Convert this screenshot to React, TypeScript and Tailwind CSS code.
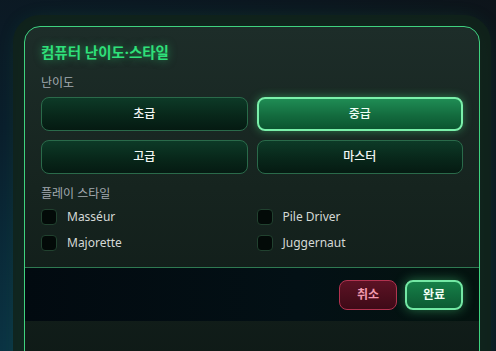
import React, { useState } from "react";

const levels = ["초급", "중급", "고급", "마스터"];
const styles = ["Masséur", "Pile Driver", "Majorette", "Juggernaut"];

export default function App() {
  const [level, setLevel] = useState("중급");
  const [picked, setPicked] = useState<string[]>([]);
  const toggle = (s: string) =>
    setPicked((p) => (p.includes(s) ? p.filter((x) => x !== s) : [...p, s]));

  return (
    <div
      className="w-[496px] h-[351px] overflow-hidden bg-[radial-gradient(ellipse_at_0%_100%,#0b3344_0%,#0a1e2c_45%,#0d141a_100%)] pl-[24px] pr-[16px] pt-[26px]"
      style={{ fontFamily: '"Noto Sans", "Noto Sans CJK KR", sans-serif' }}
    >
      <div className="h-[360px] rounded-t-[16px] border border-[#3fd27f] bg-[linear-gradient(180deg,#1d2d29_0%,#16241f_45%,#0e1916_100%)] shadow-[0_0_0_11px_rgba(16,34,26,0.85),0_0_24px_rgba(34,197,94,0.25)] flex flex-col">
        <div className="px-[16px] pt-[14px]">
          <div className="text-[14.5px] leading-[22px] font-bold text-[#2fe07a] [text-shadow:0_0_8px_rgba(47,224,122,0.55)]">
            컴퓨터 난이도·스타일
          </div>
          <div className="mt-[12px] text-[12px] leading-[16px] text-[#a3aab0]">난이도</div>
          <div className="mt-[6px] grid grid-cols-2 gap-[9px]">
            {levels.map((l) => {
              const on = l === level;
              return (
                <button
                  key={l}
                  onClick={() => setLevel(l)}
                  className={
                    on
                      ? "h-[34px] rounded-[8px] border-2 border-[#7af0aa] bg-[linear-gradient(180deg,#1f8c54_0%,#136b3e_55%,#0c5430_100%)] text-[12px] font-medium text-[#f0fff5] shadow-[0_0_10px_rgba(74,222,128,0.45)]"
                      : "h-[34px] rounded-[8px] border border-[#2a6a4a] bg-[linear-gradient(180deg,#0d3a27_0%,#08271a_55%,#051a12_100%)] text-[12px] font-medium text-[#f3f7f5]"
                  }
                >
                  {l}
                </button>
              );
            })}
          </div>
          <div className="mt-[12px] text-[12px] leading-[16px] text-[#a3aab0]">플레이 스타일</div>
          <div className="mt-[7px] grid grid-cols-2 gap-x-[9px] gap-y-[10px] pb-[16px]">
            {styles.map((s) => {
              const on = picked.includes(s);
              return (
                <label key={s} className="flex items-center gap-[10px] h-[16px] cursor-pointer" onClick={() => toggle(s)}>
                  <span
                    className={
                      on
                        ? "w-[16px] h-[16px] rounded-[4px] border border-[#3fd27f] bg-[#0f5a33]"
                        : "w-[16px] h-[16px] rounded-[4px] border border-[#21412f] bg-[#030a08]"
                    }
                  />
                  <span className="text-[12px] leading-[16px] text-[#d4d9d6]">{s}</span>
                </label>
              );
            })}
          </div>
        </div>
        <div className="border-t border-[#2f7a52] bg-[linear-gradient(90deg,#020a10_0%,#031015_60%,#04130f_100%)] h-[54px] px-[16px] flex items-center justify-end gap-[8px]">
          <button className="w-[58px] h-[30px] rounded-[8px] border border-[#b2324f] bg-[linear-gradient(180deg,#5c1224_0%,#3e0a17_100%)] text-[12px] font-bold text-[#f29ab0]">
            취소
          </button>
          <button className="w-[58px] h-[30px] rounded-[8px] border-2 border-[#73e8a4] bg-[linear-gradient(180deg,#168048_0%,#0d5a33_100%)] text-[12px] font-bold text-[#f0fff5] shadow-[0_0_12px_rgba(74,222,128,0.45)]">
            완료
          </button>
        </div>
        <div className="flex-1" />
      </div>
    </div>
  );
}
